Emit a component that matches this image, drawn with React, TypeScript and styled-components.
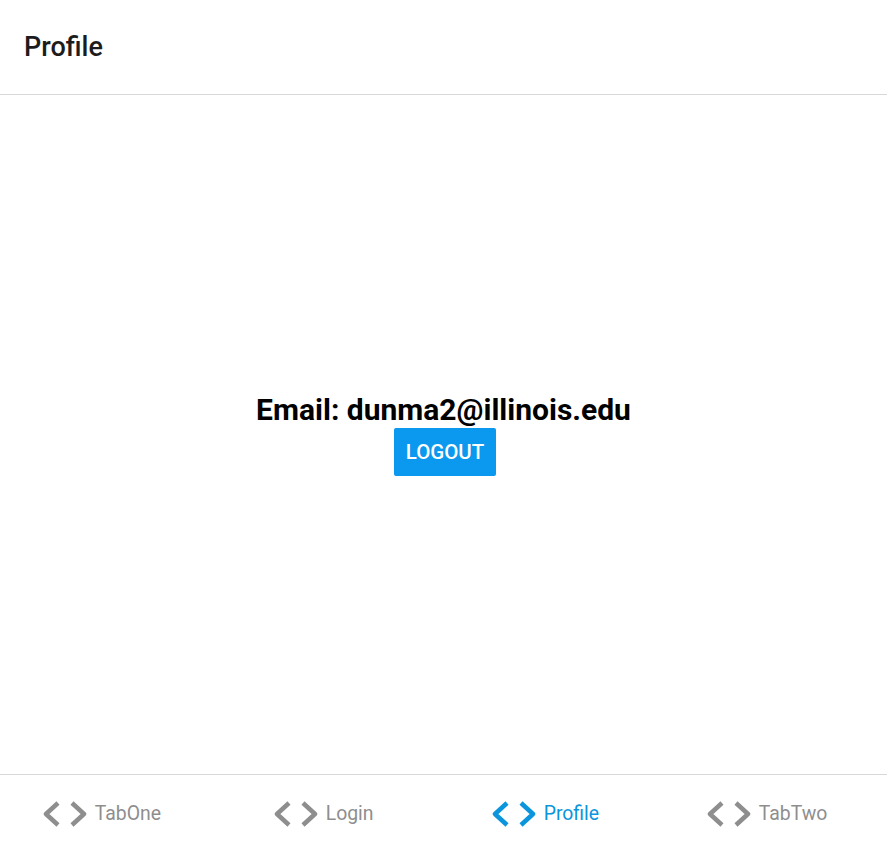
import styled, { createGlobalStyle } from 'styled-components';

const GlobalStyle = createGlobalStyle`
  html, body, #root {
    margin: 0;
    padding: 0;
    height: 100%;
  }
  body {
    font-family: Roboto, "Liberation Sans", sans-serif;
    background: #ffffff;
  }
`;

const Screen = styled.div`
  display: flex;
  flex-direction: column;
  height: 100vh;
  background: #ffffff;
`;

const Header = styled.header`
  height: 94px;
  display: flex;
  align-items: center;
  padding: 0 24px;
  border-bottom: 1px solid #d8d8d8;
  flex-shrink: 0;
`;

const HeaderTitle = styled.h1`
  margin: 0;
  font-size: 27px;
  font-weight: 500;
  color: #1c1c1e;
`;

const Content = styled.main`
  flex: 1;
  display: flex;
  flex-direction: column;
  align-items: center;
  justify-content: center;
`;

const Email = styled.div`
  font-size: 30px;
  font-weight: 700;
  color: #000000;
  line-height: 32px;
`;

const LogoutButton = styled.button`
  margin-top: 2px;
  margin-left: 3px;
  height: 48px;
  padding: 0 12px;
  border: none;
  border-radius: 2px;
  background: #0a99ee;
  color: #ffffff;
  font-family: Roboto, "Liberation Sans", sans-serif;
  font-size: 20.5px;
  font-weight: 500;
  text-transform: uppercase;
  cursor: pointer;
`;

const TabBar = styled.nav`
  height: 69px;
  border-top: 1px solid #d8d8d8;
  display: grid;
  grid-template-columns: repeat(4, 1fr);
  flex-shrink: 0;
`;

const Tab = styled.div<{ $active?: boolean }>`
  display: flex;
  align-items: center;
  justify-content: center;
  padding-top: 8px;
  color: ${(p) => (p.$active ? '#0a95dc' : '#8e8e8f')};
  cursor: pointer;
`;

const TabLabel = styled.span`
  font-size: 19.4px;
  margin-left: 8px;
  margin-right: 18px;
`;

const CodeIcon = () => (
  <svg width="44" height="26" viewBox="0 0 44 26" fill="none">
    <path
      d="M15 2 L3 13 L15 24 M29 2 L41 13 L29 24"
      stroke="currentColor"
      strokeWidth="4.5"
      strokeLinecap="butt"
      strokeLinejoin="round"
    />
  </svg>
);

const tabs = ['TabOne', 'Login', 'Profile', 'TabTwo'];

const App = () => {
  return (
    <Screen>
      <GlobalStyle />
      <Header>
        <HeaderTitle>Profile</HeaderTitle>
      </Header>
      <Content>
        <Email>Email: dunma2@illinois.edu</Email>
        <LogoutButton>Logout</LogoutButton>
      </Content>
      <TabBar>
        {tabs.map((t) => (
          <Tab key={t} $active={t === 'Profile'}>
            <CodeIcon />
            <TabLabel>{t}</TabLabel>
          </Tab>
        ))}
      </TabBar>
    </Screen>
  );
};

export default App;
